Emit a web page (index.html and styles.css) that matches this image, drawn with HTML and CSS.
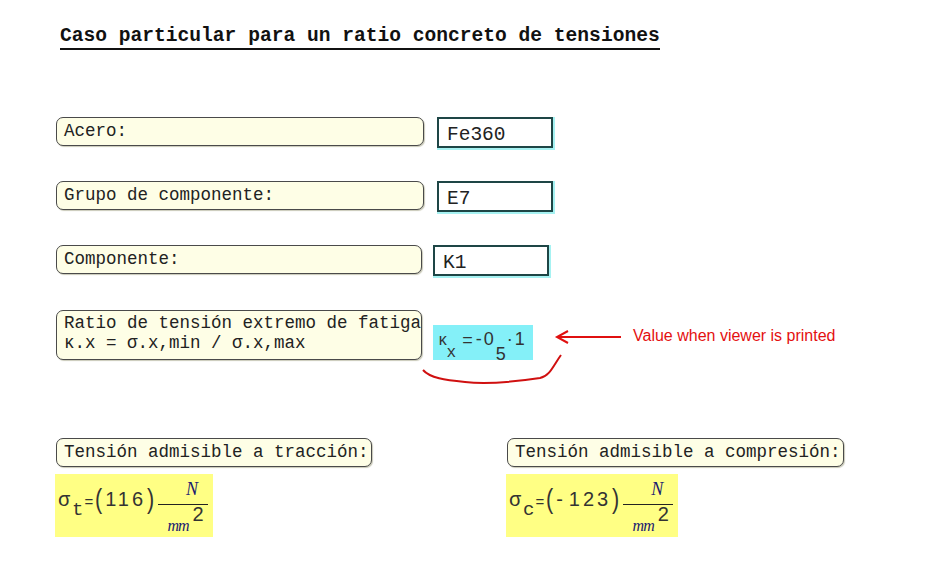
FILE: index.html
```html
<!DOCTYPE html>
<html lang="es">
<head>
    <meta charset="UTF-8">
    <title>Caso particular</title>
    <link rel="stylesheet" href="styles.css">
</head>
<body>
<div class="sheet">
    <h1 class="title">Caso particular para un ratio concreto de tensiones</h1>

    <div class="fields">
        <div class="row">
            <div class="label">Acero:</div>
            <div class="value">Fe360</div>
        </div>
        <div class="row">
            <div class="label">Grupo de componente:</div>
            <div class="value">E7</div>
        </div>
        <div class="row">
            <div class="label short">Componente:</div>
            <div class="value">K1</div>
        </div>
        <div class="row bottom">
            <div class="label tall">Ratio de tensión extremo de fatiga<br>κ.x = σ.x,min / σ.x,max</div>
            <div class="ratio">
                <span class="k">κ</span><span class="kx">x</span><span class="eq">=</span><span class="num">-0</span><span class="five">5</span><span class="num">·1</span>
            </div>
        </div>
    </div>

    <div class="results">
        <div class="result">
            <div class="label auto">Tensión admisible a tracción:</div>
            <div class="math">
                <span class="sig">σ</span><span class="sub">t</span><span class="eqs">=</span><span class="par">(</span><span class="n">116</span><span class="par">)</span>
                <span class="frac">
                    <span class="top">N</span>
                    <span class="den"><span class="mm">mm</span><span class="sq">2</span></span>
                </span>
            </div>
        </div>
        <div class="result">
            <div class="label auto">Tensión admisible a compresión:</div>
            <div class="math">
                <span class="sig">σ</span><span class="sub">c</span><span class="eqs">=</span><span class="par">(</span><span class="n"><span class="minus">-</span>123</span><span class="par">)</span>
                <span class="frac">
                    <span class="top">N</span>
                    <span class="den"><span class="mm">mm</span><span class="sq">2</span></span>
                </span>
            </div>
        </div>
    </div>

    <!-- marcas a mano sobre la hoja -->
    <svg class="annot" width="943" height="579" viewBox="0 0 943 579">
        <path d="M558 337 L621 337" stroke="#e01010" stroke-width="2" fill="none"/>
        <path d="M568 331 L557 337 L568 343" stroke="#e01010" stroke-width="2" fill="none"/>
        <path d="M423 370 C430 378 445 380 465 382 C490 385 520 381 540 378 C550 376 553 366 561 355" stroke="#d01010" stroke-width="2" fill="none"/>
    </svg>
    <span class="note">Value when viewer is printed</span>
</div>
</body>
</html>
```

FILE: styles.css
```css
body {
    margin: 0;
    background: #fff;
    font-family: "Liberation Mono", "Courier New", monospace;
    color: #222;
}
.sheet {
    position: relative;
    width: 943px;
    height: 579px;
    padding: 27px 0 0 56px;
    box-sizing: border-box;
}
.title {
    display: inline-block;
    margin: 0 0 0 4px;
    font-size: 19.6px;
    line-height: 19px;
    font-weight: bold;
    color: #111;
    border-bottom: 2px solid #111;
    padding-bottom: 2px;
}
.fields {
    display: flex;
    flex-direction: column;
    gap: 33px;
    margin-top: 67px;
}
.row {
    display: flex;
    align-items: flex-start;
    gap: 13px;
}
.row.bottom {
    align-items: flex-end;
    gap: 11px;
    margin-top: 1px;
}
.label {
    width: 368px;
    height: 29px;
    box-sizing: border-box;
    padding: 3px 0 0 7px;
    background: #fefee6;
    border: 1px solid #4a4a4a;
    border-radius: 7px;
    box-shadow: 1px 1px 1px #c9c9b8;
    font-size: 17.5px;
    line-height: 20px;
    white-space: nowrap;
}
.label.short {
    width: 366px;
}
.label.tall {
    width: 366px;
    height: 50px;
    padding-top: 2px;
}
.label.auto {
    width: auto;
    display: inline-block;
    padding-right: 2px;
}
.value {
    width: 116px;
    height: 31px;
    box-sizing: border-box;
    padding: 5px 0 0 8px;
    border: 2px solid #1e4646;
    box-shadow: 1px 1px 0 1px #a6f2f2;
    font-size: 19.5px;
    line-height: 22px;
}
.row:nth-child(3) .value {
    margin-left: -2px;
}
.ratio {
    width: 100px;
    height: 35px;
    box-sizing: border-box;
    background: #84f0f8;
    display: flex;
    align-items: flex-start;
    padding: 4px 0 0 5px;
    font-size: 16px;
    color: #333;
}
.ratio .k {
    margin-top: 3px;
}
.ratio .kx {
    margin-top: 15px;
    margin-left: -1px;
}
.ratio .eq {
    font-family: "Liberation Sans", Arial, sans-serif;
    font-size: 18px;
    margin: 1px 3px 0 6px;
}
.ratio .num {
    font-family: "Liberation Sans", Arial, sans-serif;
    font-size: 18px;
    letter-spacing: 2px;
}
.ratio .five {
    font-family: "Liberation Sans", Arial, sans-serif;
    font-size: 18px;
    margin-top: 15px;
    margin-right: 1px;
}
.results {
    display: flex;
    margin-top: 78px;
}
.result {
    display: flex;
    flex-direction: column;
    align-items: flex-start;
    gap: 7px;
    width: 451px;
    flex-shrink: 0;
}
.math {
    display: flex;
    align-items: center;
    height: 63px;
    margin-left: -1px;
    padding: 0 5px 0 3px;
    background: #ffff84;
    color: #333;
}
.math .sig {
    font-size: 20px;
    margin-top: -10px;
}
.math .sub {
    font-size: 19px;
    margin-top: 8px;
    margin-left: 2px;
}
.math .eqs {
    font-family: "Liberation Sans", Arial, sans-serif;
    font-size: 15px;
    margin: -8px 1px 0 1px;
}
.math .par {
    font-family: "Liberation Sans", Arial, sans-serif;
    font-size: 27px;
    font-weight: 300;
    margin-top: -13px;
    transform: scaleX(0.8);
}
.math .n {
    font-family: "Liberation Sans", Arial, sans-serif;
    font-size: 20px;
    letter-spacing: 3px;
    margin: -12px 0 0 2px;
}
.math .minus {
    margin-right: 3px;
}
.frac {
    display: flex;
    flex-direction: column;
    align-items: center;
    margin-left: 3px;
}
.frac .top {
    font-family: "Liberation Serif", "Times New Roman", serif;
    font-style: italic;
    font-size: 18px;
    color: #1a1a70;
    line-height: 20px;
    padding: 0 0 5px 18px;
    border-bottom: 1px solid #222;
    width: 50px;
    text-align: center;
    box-sizing: border-box;
    margin-top: 2px;
}
.frac .den {
    display: flex;
    align-items: flex-start;
    padding-left: 5px;
}
.frac .mm {
    font-family: "Liberation Serif", "Times New Roman", serif;
    font-style: italic;
    font-size: 16px;
    color: #1a1a70;
    margin-top: 12px;
    letter-spacing: -1px;
}
.frac .sq {
    font-family: "Liberation Sans", Arial, sans-serif;
    font-size: 20px;
    margin-left: 4px;
    margin-top: -2px;
}
.annot {
    position: absolute;
    left: 0;
    top: 0;
    pointer-events: none;
}
.note {
    position: absolute;
    left: 633px;
    top: 327px;
    font-family: "Liberation Sans", Arial, sans-serif;
    font-size: 16px;
    color: #e41010;
}
```
